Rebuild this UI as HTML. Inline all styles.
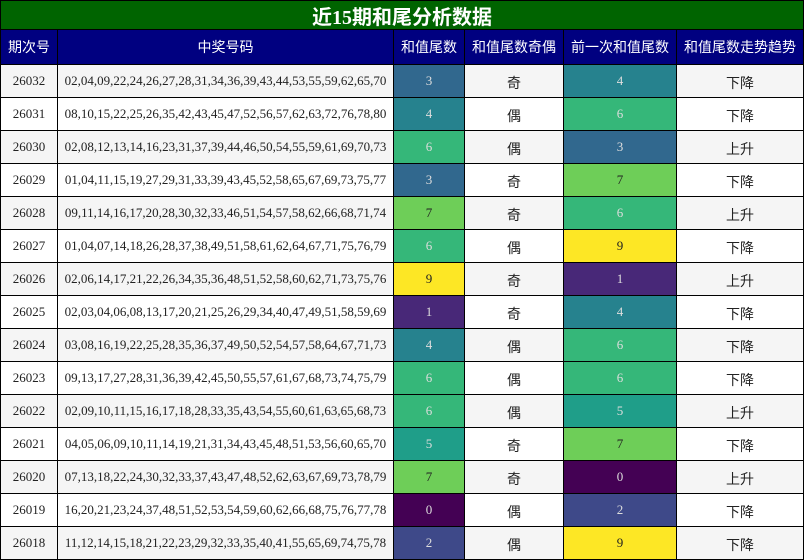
<!DOCTYPE html>
<html><head><meta charset="utf-8"><style>
body{margin:0;width:804px;height:560px;overflow:hidden;background:#000}
.g{display:grid;grid-template-columns:56px 335px 70px 98px 112px 126px;grid-template-rows:28px 34px repeat(15,32px);gap:1px;padding:1px;background:#000;width:802px}
.g div{display:flex;align-items:center;justify-content:center;font-family:"Liberation Serif","Noto Serif CJK SC",serif;font-size:13px;color:#222;white-space:nowrap}
.t{grid-column:1/7;background:#006400;color:#fff!important;font-weight:bold;font-size:20px!important;font-family:"Liberation Serif","Noto Sans CJK SC",sans-serif!important}
.h{background:#000080;color:#fff!important;font-family:"Liberation Sans","Noto Sans CJK SC",sans-serif!important;font-size:14px!important}
.a{background:#f5f5f5}.b{background:#fff}
.z{font-family:"Liberation Sans","Noto Sans CJK SC",sans-serif!important;font-size:14px!important;padding-top:3px}
.c{color:#ddd!important}
</style></head><body><div class="g" id="g">
<div class="t">近15期和尾分析数据</div>
<div class="h">期次号</div><div class="h">中奖号码</div><div class="h">和值尾数</div><div class="h">和值尾数奇偶</div><div class="h">前一次和值尾数</div><div class="h">和值尾数走势趋势</div>
<div class="a">26032</div><div class="a">02,04,09,22,24,26,27,28,31,34,36,39,43,44,53,55,59,62,65,70</div><div class="c" style="background:#31688e">3</div><div class="a z">奇</div><div class="c" style="background:#26828e">4</div><div class="a z">下降</div>
<div class="b">26031</div><div class="b">08,10,15,22,25,26,35,42,43,45,47,52,56,57,62,63,72,76,78,80</div><div class="c" style="background:#26828e">4</div><div class="b z">偶</div><div class="c" style="background:#35b779">6</div><div class="b z">下降</div>
<div class="a">26030</div><div class="a">02,08,12,13,14,16,23,31,37,39,44,46,50,54,55,59,61,69,70,73</div><div class="c" style="background:#35b779">6</div><div class="a z">偶</div><div class="c" style="background:#31688e">3</div><div class="a z">上升</div>
<div class="b">26029</div><div class="b">01,04,11,15,19,27,29,31,33,39,43,45,52,58,65,67,69,73,75,77</div><div class="c" style="background:#31688e">3</div><div class="b z">奇</div><div style="background:#6ece58">7</div><div class="b z">下降</div>
<div class="a">26028</div><div class="a">09,11,14,16,17,20,28,30,32,33,46,51,54,57,58,62,66,68,71,74</div><div style="background:#6ece58">7</div><div class="a z">奇</div><div class="c" style="background:#35b779">6</div><div class="a z">上升</div>
<div class="b">26027</div><div class="b">01,04,07,14,18,26,28,37,38,49,51,58,61,62,64,67,71,75,76,79</div><div class="c" style="background:#35b779">6</div><div class="b z">偶</div><div style="background:#fde725">9</div><div class="b z">下降</div>
<div class="a">26026</div><div class="a">02,06,14,17,21,22,26,34,35,36,48,51,52,58,60,62,71,73,75,76</div><div style="background:#fde725">9</div><div class="a z">奇</div><div class="c" style="background:#482878">1</div><div class="a z">上升</div>
<div class="b">26025</div><div class="b">02,03,04,06,08,13,17,20,21,25,26,29,34,40,47,49,51,58,59,69</div><div class="c" style="background:#482878">1</div><div class="b z">奇</div><div class="c" style="background:#26828e">4</div><div class="b z">下降</div>
<div class="a">26024</div><div class="a">03,08,16,19,22,25,28,35,36,37,49,50,52,54,57,58,64,67,71,73</div><div class="c" style="background:#26828e">4</div><div class="a z">偶</div><div class="c" style="background:#35b779">6</div><div class="a z">下降</div>
<div class="b">26023</div><div class="b">09,13,17,27,28,31,36,39,42,45,50,55,57,61,67,68,73,74,75,79</div><div class="c" style="background:#35b779">6</div><div class="b z">偶</div><div class="c" style="background:#35b779">6</div><div class="b z">下降</div>
<div class="a">26022</div><div class="a">02,09,10,11,15,16,17,18,28,33,35,43,54,55,60,61,63,65,68,73</div><div class="c" style="background:#35b779">6</div><div class="a z">偶</div><div class="c" style="background:#1f9e89">5</div><div class="a z">上升</div>
<div class="b">26021</div><div class="b">04,05,06,09,10,11,14,19,21,31,34,43,45,48,51,53,56,60,65,70</div><div class="c" style="background:#1f9e89">5</div><div class="b z">奇</div><div style="background:#6ece58">7</div><div class="b z">下降</div>
<div class="a">26020</div><div class="a">07,13,18,22,24,30,32,33,37,43,47,48,52,62,63,67,69,73,78,79</div><div style="background:#6ece58">7</div><div class="a z">奇</div><div class="c" style="background:#440154">0</div><div class="a z">上升</div>
<div class="b">26019</div><div class="b">16,20,21,23,24,37,48,51,52,53,54,59,60,62,66,68,75,76,77,78</div><div class="c" style="background:#440154">0</div><div class="b z">偶</div><div class="c" style="background:#3e4989">2</div><div class="b z">下降</div>
<div class="a">26018</div><div class="a">11,12,14,15,18,21,22,23,29,32,33,35,40,41,55,65,69,74,75,78</div><div class="c" style="background:#3e4989">2</div><div class="a z">偶</div><div style="background:#fde725">9</div><div class="a z">下降</div>
</div></body></html>
